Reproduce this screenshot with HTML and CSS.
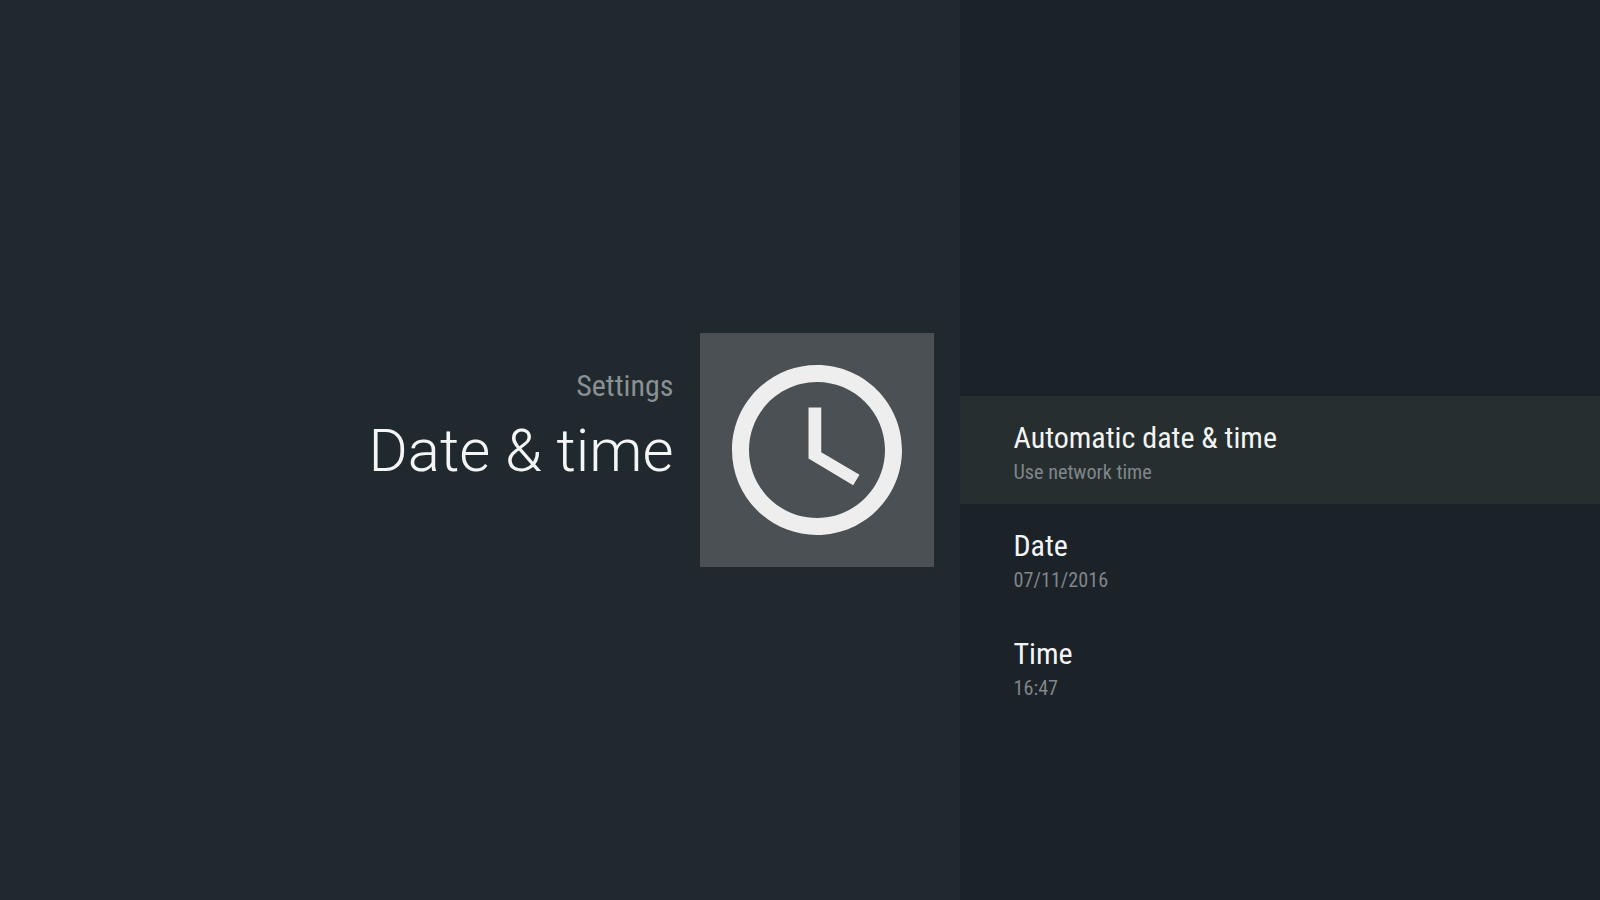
FILE: index.html
```html
<!DOCTYPE html>
<html lang="en">
<head>
    <meta charset="UTF-8">
    <title>Date &amp; time</title>
    <link rel="stylesheet" href="styles.css">
</head>
<body>
  <main class="screen">
    <section class="guidance">
      <div class="heading">
        <div class="breadcrumb">Settings</div>
        <h1 class="title">Date &amp; time</h1>
      </div>
      <div class="tile">
        <svg class="clock" viewBox="0 0 24 24" aria-hidden="true">
          <path d="M11.99 2C6.47 2 2 6.48 2 12s4.47 10 9.99 10C17.52 22 22 17.52 22 12S17.52 2 11.99 2zM12 20c-4.42 0-8-3.58-8-8s3.58-8 8-8 8 3.58 8 8-3.58 8-8 8z"/>
          <path d="M12.5 7H11v6l5.25 3.15.75-1.23-4.5-2.67z"/>
        </svg>
      </div>
    </section>
    <section class="actions">
      <div class="item selected">
        <div class="item-title">Automatic date &amp; time</div>
        <div class="item-desc">Use network time</div>
      </div>
      <div class="item">
        <div class="item-title">Date</div>
        <div class="item-desc">07/11/2016</div>
      </div>
      <div class="item">
        <div class="item-title">Time</div>
        <div class="item-desc">16:47</div>
      </div>
    </section>
  </main>
</body>
</html>
```

FILE: styles.css
```css
html, body { margin: 0; height: 100%; }
body { font-family: Roboto, "Liberation Sans", sans-serif; background: #20292e; color: #f1f1f1; overflow: hidden; }

.screen { display: flex; height: 900px; }

.guidance { width: 960px; box-sizing: border-box; padding-right: 26.5px; display: flex; align-items: center; justify-content: flex-end; gap: 26.5px; background: #20292e; }
.heading { text-align: right; padding-bottom: 42px; }
.breadcrumb { font-size: 30px; line-height: 40px; margin-bottom: 3px; font-stretch: 75%; color: #8b9093; }
.title { margin: 0; font-size: 60px; line-height: 84px; font-weight: 300; color: #f4f5f5; }
.tile { width: 233.5px; height: 234px; background: #4a5053; display: flex; align-items: center; justify-content: center; }
.clock { width: 204px; height: 204px; fill: #eeeeee; display: block; }

.actions { width: 640px; padding-top: 396px; box-sizing: border-box; background: #1b2228; }
.item { height: 108px; box-sizing: border-box; padding: 22px 53.5px 0; }
.item.selected { background: #262e30; }
.item-title { font-size: 30px; line-height: 40px; font-stretch: 75%; color: #f3f4f4; }
.item-desc { font-size: 20.2px; line-height: 28px; font-stretch: 75%; color: #80868a; }
```
